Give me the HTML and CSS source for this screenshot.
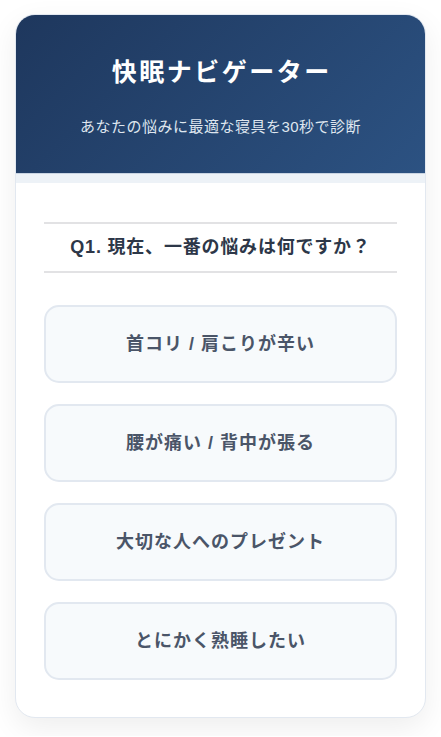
FILE: index.html
```html
<!DOCTYPE html>
<html lang="ja">
<head>
<meta charset="utf-8">
<title>快眠ナビゲーター</title>
<link rel="stylesheet" href="styles.css">
</head>
<body>
<div class="page">
  <div class="card">
    <header class="header">
      <h1 class="title">快眠ナビゲーター</h1>
      <p class="subtitle">あなたの悩みに最適な寝具を30秒で診断</p>
    </header>
    <div class="progress"><div class="progress-fill" style="width:0%"></div></div>
    <main class="body">
      <div class="question">Q1. 現在、一番の悩みは何ですか？</div>
      <div class="options">
        <button class="option">首コリ / 肩こりが辛い</button>
        <button class="option">腰が痛い / 背中が張る</button>
        <button class="option">大切な人へのプレゼント</button>
        <button class="option">とにかく熟睡したい</button>
      </div>
    </main>
  </div>
</div>
</body>
</html>
```
FILE: styles.css
```css
* { box-sizing: border-box; }
html, body { margin: 0; padding: 0; background: #ffffff; }
body {
  font-family: "Liberation Sans", "Noto Sans CJK JP", sans-serif;
}
.page {
  padding: 14px 15px 18px;
}
.card {
  border: 1px solid #e2e8f0;
  border-radius: 20px;
  overflow: hidden;
  background: #ffffff;
  box-shadow: 0 10px 30px rgba(0, 0, 0, 0.07);
}
.header {
  background: linear-gradient(135deg, #1e375d 0%, #2c5282 100%);
  height: 158px;
  padding: 40px 20px 0;
  text-align: center;
  color: #ffffff;
}
.title {
  margin: 0 0 27px;
  font-size: 25px;
  line-height: 34px;
  font-weight: 700;
  letter-spacing: 2.5px;
  padding-left: 2.5px;
}
.subtitle {
  margin: 0;
  font-size: 15px;
  line-height: 22px;
  letter-spacing: 0.5px;
  color: #dfe6ef;
}
.progress {
  height: 10px;
  background: #edf2f7;
  border-top: 1px solid #c9d4e2;
}
.progress-fill {
  height: 100%;
  background: #2c5282;
}
.body {
  padding: 39px 28px 37px;
}
.question {
  border-top: 2px solid #e2e2e4;
  border-bottom: 2px solid #e2e2e4;
  padding: 10px 0 11px;
  font-size: 18px;
  line-height: 26px;
  font-weight: 700;
  letter-spacing: 0.8px;
  text-align: center;
  color: #2d3748;
}
.options {
  margin-top: 32px;
  display: flex;
  flex-direction: column;
  gap: 21px;
}
.option {
  display: block;
  width: 100%;
  height: 78px;
  padding: 0 16px;
  border: 2px solid #e2e8f0;
  border-radius: 15px;
  background: #f7fafc;
  font-family: inherit;
  font-size: 18px;
  line-height: 25px;
  font-weight: 700;
  letter-spacing: 1px;
  color: #4a5568;
  text-align: center;
  cursor: pointer;
}
```
